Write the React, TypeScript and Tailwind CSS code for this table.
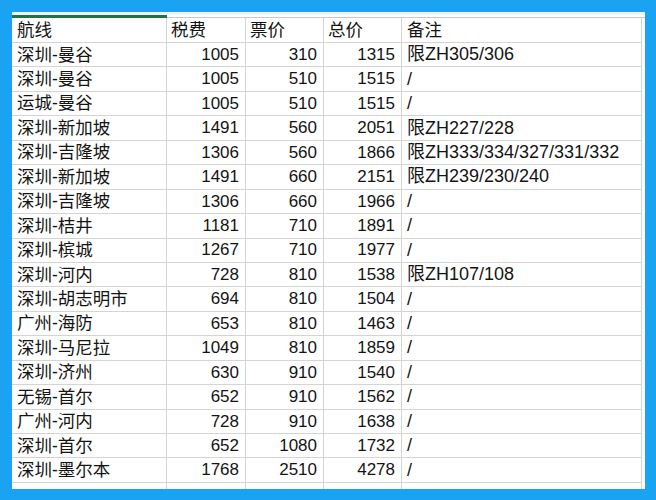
const rows: [string, number, number, number, string][] = [
  ["深圳-曼谷", 1005, 310, 1315, "限ZH305/306"],
  ["深圳-曼谷", 1005, 510, 1515, "/"],
  ["运城-曼谷", 1005, 510, 1515, "/"],
  ["深圳-新加坡", 1491, 560, 2051, "限ZH227/228"],
  ["深圳-吉隆坡", 1306, 560, 1866, "限ZH333/334/327/331/332"],
  ["深圳-新加坡", 1491, 660, 2151, "限ZH239/230/240"],
  ["深圳-吉隆坡", 1306, 660, 1966, "/"],
  ["深圳-桔井", 1181, 710, 1891, "/"],
  ["深圳-槟城", 1267, 710, 1977, "/"],
  ["深圳-河内", 728, 810, 1538, "限ZH107/108"],
  ["深圳-胡志明市", 694, 810, 1504, "/"],
  ["广州-海防", 653, 810, 1463, "/"],
  ["深圳-马尼拉", 1049, 810, 1859, "/"],
  ["深圳-济州", 630, 910, 1540, "/"],
  ["无锡-首尔", 652, 910, 1562, "/"],
  ["广州-河内", 728, 910, 1638, "/"],
  ["深圳-首尔", 652, 1080, 1732, "/"],
  ["深圳-墨尔本", 1768, 2510, 4278, "/"],
];

const cols = "grid grid-cols-[155px_79px_78px_78px_240px]";
const cell = "border-r border-b border-[#d4d4d4] flex items-center overflow-hidden whitespace-nowrap";

export default function App() {
  return (
    <div
      className="w-[656px] h-[500px] bg-[#1ba3f3] pt-[12px] pl-[12px]"
      style={{ fontFamily: '"Liberation Sans", "Noto Sans CJK SC", sans-serif' }}
    >
      <div className="w-[633px] h-[477px] bg-white flex flex-col text-[17.5px] text-[#141414]">
        <div className="h-[3px] bg-[#f2f2f2]" />
        <div className="flex h-[3px]">
          <div className="w-[155px] bg-[#217346]" />
          <div className="flex-1 border-b border-[#c8c8c8]" />
        </div>
        <div className={`${cols} h-[25px]`}>
          <div className={`${cell} pl-[5px]`}>航线</div>
          <div className={`${cell} pl-[4px]`}>税费</div>
          <div className={`${cell} pl-[4px]`}>票价</div>
          <div className={`${cell} pl-[4px]`}>总价</div>
          <div className={`${cell} pl-[5px]`}>备注</div>
        </div>
        {rows.map((r, i) => (
          <div key={i} className={`${cols} h-[24.45px]`}>
            <div className={`${cell} pl-[5px]`}>{r[0]}</div>
            <div className={`${cell} justify-end pr-[6px] text-[17px]`}>{r[1]}</div>
            <div className={`${cell} justify-end pr-[6px] text-[17px]`}>{r[2]}</div>
            <div className={`${cell} justify-end pr-[6px] text-[17px]`}>{r[3]}</div>
            <div className={`${cell} pl-[5px] text-[18px]`}>{r[4]}</div>
          </div>
        ))}
        <div className={`${cols} flex-1`}>
          <div className="border-r border-[#d4d4d4]" />
          <div className="border-r border-[#d4d4d4]" />
          <div className="border-r border-[#d4d4d4]" />
          <div className="border-r border-[#d4d4d4]" />
          <div className="border-r border-[#d4d4d4]" />
        </div>
      </div>
    </div>
  );
}
